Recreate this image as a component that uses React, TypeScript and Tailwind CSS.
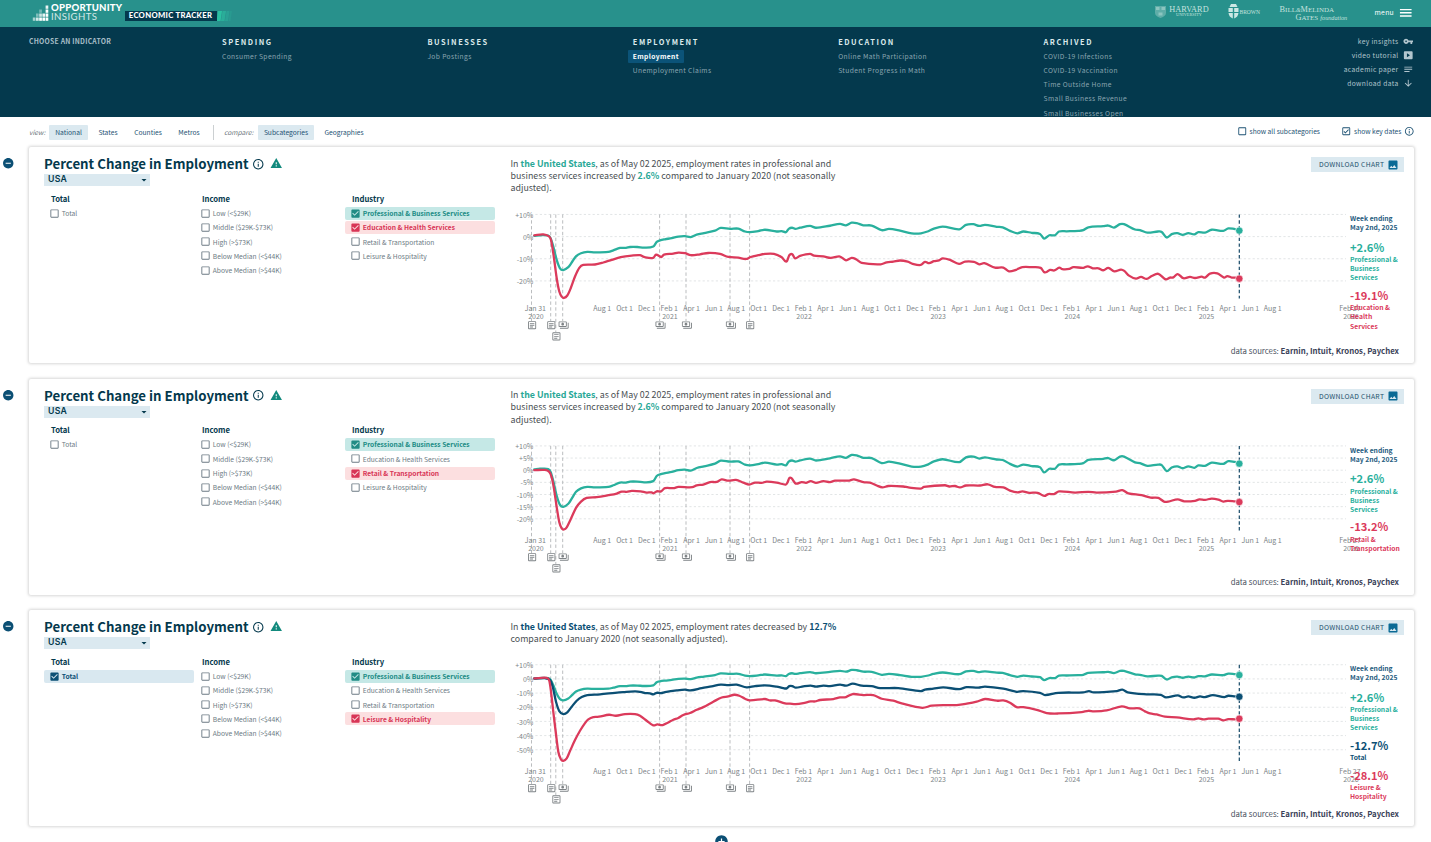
import React from 'react';
import {
  MdAddCircle,
  MdArrowDownward,
  MdArrowDropDown,
  MdCheckBox,
  MdCheckBoxOutlineBlank,
  MdImage,
  MdInfoOutline,
  MdMenu,
  MdNotes,
  MdOutlineArticle,
  MdOutlineCheckBox,
  MdOutlinePayments,
  MdRemoveCircle,
  MdVpnKey,
  MdWarning,
} from 'react-icons/md';

type Point = [number, number];

interface Series {
  name: string[];
  value: string;
  end: number;
  color: string;
  points: Point[];
}

interface CardData {
  selected: Record<string, Tone>;
  summary: React.ReactNode;
  top: number;
  zero: number;
  unit: number;
  ticks: number[];
  series: Series[];
}

type Tone = 'teal' | 'red' | 'navy';

// [x on the time axis, percent change]
const professional: Point[] = [
  [34.3, 0.3], [40, 0.6], [48.3, 0.5], [50.7, -0.8], [53.3, -4.5], [56.7, -10.5], [60, -14.3], [63.3, -15.1], [68.3, -13.8], [71.7, -11.7],
  [76, -8.9], [81, -7.5], [87.3, -6.9], [95, -7.1], [108.3, -6.9], [113.3, -6.2], [120, -5.1], [126, -5.1], [130, -4.7], [137.3, -4.7],
  [144.3, -5], [153.3, -4.5], [156.7, -2.4], [160, -1.7], [165, -1.2], [171.7, -0.7], [178.3, 0], [185, 0.2], [190.7, -0.2], [196.7, 0.9],
  [204, 1.6], [215, 2.7], [220.7, 3.9], [230, 3.5], [238.3, 3.6], [245, 2.3], [250, 2], [258.3, 2.5], [265, 3.1], [276.7, 2.3],
  [281.7, 2.5], [286, 2], [288.7, 3.5], [292, 4], [295.3, 3.5], [300, 4], [310, 4.8], [316, 4], [330, 4.9], [340, 5.7],
  [346, 5.1], [351.7, 6.3], [356.7, 6.1], [363.3, 5.1], [371.7, 5], [381.7, 2.9], [389, 3.5], [400, 2.7], [411.7, 1.5], [421, 1.5],
  [428.3, 2.4], [433.3, 3.5], [442.7, 4.5], [459.3, 3.3], [466, 5.3], [473.3, 5.6], [479.3, 4.8], [485, 5.3], [496.7, 4.4], [502.7, 4.2],
  [510, 2.6], [517.3, 1.5], [523.3, 2.3], [531.7, 1.7], [540, 1.2], [544, -0.9], [549.3, 0.6], [555, 0.6], [559, 2.3], [566.7, 2.4],
  [578.3, 2.6], [583.3, 2.9], [588.3, 4.2], [603.3, 4.7], [608.3, 5], [614, 4.1], [620, 5.6], [624, 5.6], [635, 3.2], [640, 2.9],
  [647.3, 1.8], [658, 2.3], [661.7, 2.1], [666.7, -0.4], [671.7, 1.1], [677.3, 1.6], [682.7, 0.8], [688.3, 1.6], [694.3, 1], [698.3, 2],
  [705, 1.8], [711.7, 3.1], [723.3, 2.6], [728.3, 3.7], [735, 3.4],
];

const education: Point[] = [
  [34.3, 0.6], [43.3, 1], [49, 0.1], [51, -1.5], [53.3, -7.5], [56.7, -18.8], [59.3, -24.8], [61.7, -27.1], [64, -27.7], [67.3, -26.6],
  [70.7, -23.3], [75, -18], [79.3, -14.1], [83.3, -12.8], [95, -12.6], [103.3, -11.7], [111.7, -10.5], [120.7, -9.3], [131.7, -8.6], [140, -8.4],
  [144, -9.2], [153.3, -9.6], [156, -8.1], [161.3, -9.2], [164, -8.1], [173.3, -7.7], [178.3, -7.2], [185, -7.5], [190.7, -8.4], [200, -8],
  [208.3, -7.4], [220, -7.8], [228.3, -9.2], [238.3, -9.5], [246, -10.1], [250.7, -9.2], [258.3, -8.4], [265, -7.8], [274, -7.8], [281.7, -9.3],
  [285, -11], [287, -11], [289.3, -8.4], [292.3, -8], [295, -9.8], [300, -8.7], [310, -7.8], [314, -8.6], [323.3, -8.9], [330.7, -9.6],
  [340, -9], [346, -10.7], [351.7, -9.6], [356, -10.2], [361.7, -11.9], [380.7, -12.5], [386.7, -11.6], [393.3, -11.3], [400, -10.8], [407.7, -11.3],
  [412.7, -12.3], [420.7, -12.8], [425, -11.4], [429, -12], [434, -11.1], [439, -10.7], [442.7, -9.8], [450, -10.5], [459, -12.3], [465, -11.3],
  [474, -11.4], [479.3, -12.5], [484.3, -12], [495, -14], [503.3, -14], [509, -15.7], [516, -15], [522.3, -13.8], [531.7, -13.8], [540.7, -14.1],
  [544, -16], [546.7, -16], [550, -15], [554.3, -15.3], [559.3, -14], [562.3, -14.7], [569.3, -14.6], [573.3, -13.8], [583.3, -14.1], [587.7, -13.4],
  [592.7, -14.3], [598.3, -14.3], [603.3, -15.2], [608.3, -14.1], [614.3, -15.7], [621, -14.9], [624.3, -15.5], [629, -17.6], [636, -19], [641, -18.2],
  [646.7, -19.1], [651.7, -17.8], [658.3, -16.8], [665.7, -19.3], [670, -18.5], [673.3, -18.4], [677.7, -16.9], [683.3, -18.8], [690, -18.2], [695, -18.7],
  [701.7, -18.1], [705, -18.5], [710, -16.7], [717.3, -16.6], [724, -18.5], [727.3, -17.8], [731.7, -18.5], [735.7, -18.5],
];

const retail: Point[] = [
  [34.3, 0], [45, 0.1], [49.3, -0.7], [51.7, -2.9], [54, -7.7], [56.7, -15.2], [59.3, -21.4], [61.7, -23.9], [64, -24.4], [66.7, -23.5],
  [70.7, -20.2], [76, -15.5], [81, -12.9], [86.7, -11.4], [96.7, -11.1], [108.3, -10.3], [116.7, -9.6], [121.7, -8.8], [126.7, -8.9], [131.7, -8.5],
  [140.7, -8.7], [146.7, -9.2], [151.7, -9.1], [153.3, -9.5], [156.7, -8.7], [161, -8.7], [165, -7.4], [173.3, -7.4], [178.3, -6.9], [192.3, -7],
  [196.7, -6.2], [203.3, -5.9], [210, -4.9], [216.7, -4.8], [221.7, -3.8], [228.3, -4.3], [236, -4], [243.3, -5.1], [249.3, -5.9], [255, -5.1],
  [261.7, -5.2], [266.7, -4.7], [276.7, -5.1], [285.7, -5.9], [287.7, -4.9], [289.3, -3.2], [291.7, -3.4], [295.7, -5.5], [301.7, -4.9], [306, -5.2],
  [310.7, -4.5], [316, -5.2], [323.3, -4.5], [330, -4.9], [335, -4.3], [348.3, -4.3], [354, -3.8], [363.3, -4.9], [370, -5.1], [376.7, -6.3],
  [382.3, -7.1], [388.3, -6.5], [403.3, -6.7], [408.3, -7.1], [420.7, -7.6], [424, -6.9], [445, -6.2], [449.3, -6.7], [455, -6.5], [460, -7.1],
  [466, -6.3], [480, -6.3], [487.7, -5.8], [495, -6.9], [503.3, -7.1], [510, -8.4], [517.7, -9.1], [522.3, -8.7], [529.3, -9.3], [537.7, -9.3],
  [544.3, -10.6], [548.3, -9.8], [554, -9.8], [559, -8.7], [575, -9.2], [588.3, -8.9], [596.7, -9.2], [616, -8.8], [622.3, -8.2], [628.3, -9.5],
  [641.7, -10.3], [650.7, -11.3], [658.3, -11.4], [664, -12.9], [668.3, -12.9], [677.7, -12], [684.3, -12.8], [695, -12.6], [699.3, -12], [705, -12.2],
  [711.7, -11.7], [718.3, -12.1], [723.3, -12.9], [727.7, -12.6], [735, -12.8],
];

const total: Point[] = [
  [34.3, 0.2], [45, 0.5], [50, -0.8], [52.7, -5.5], [56, -16.1], [59.3, -22.7], [63.3, -24.8], [67.3, -23.6], [71.7, -19.6], [76.7, -15.4],
  [81.7, -12.8], [87.3, -11.4], [100, -10.9], [115, -9.8], [123.3, -9.3], [135, -8.8], [141.7, -9.3], [145, -10], [150, -10.2], [153.3, -10.9],
  [156.7, -9.8], [161, -10], [165, -9.3], [176.7, -8.1], [185, -7.6], [190.7, -8.1], [201.7, -6.5], [211.7, -5.3], [220.7, -4.1], [228.3, -4.4],
  [236.7, -4.1], [246.7, -6], [255, -5.1], [265, -4.6], [276.7, -5.5], [283.3, -6.5], [286.7, -6.7], [289.3, -5.1], [292.3, -5.1], [295.7, -6.2],
  [303.3, -5.3], [310.7, -4.8], [316, -5.5], [323.3, -4.8], [330, -5.1], [340, -4.1], [346, -4.8], [352.7, -3.4], [361.7, -4.8], [371.7, -5.1],
  [380, -6.5], [398.3, -6.5], [420.7, -8.6], [425, -7.6], [433.3, -6.9], [443.3, -6], [459.3, -7.2], [466.7, -5.8], [478.3, -6.2], [485, -5.5],
  [503.3, -6.9], [516.7, -9.1], [523.3, -8.6], [540, -9.8], [545, -11.4], [558.3, -9.8], [583.3, -9.5], [589, -8.6], [593.3, -9.5], [616.7, -8.6],
  [622.3, -7.6], [627.7, -9.5], [646.7, -10.9], [660.7, -11.2], [666, -13.1], [677.7, -11.6], [683.3, -13.1], [688.3, -12.4], [694.3, -13.3], [700, -12.4],
  [705, -12.8], [712.7, -11.4], [724.3, -12.8], [728.3, -11.9], [735, -12.4],
];

const leisure: Point[] = [
  [34.3, 0.3], [46.7, 0.8], [49.3, -1.3], [51, -9], [53.3, -23.2], [55.7, -37.3], [58.3, -51.4], [61, -56.8], [63.3, -57.8], [66.7, -56.1],
  [70, -50.9], [75, -43.2], [80, -36.6], [85, -31.2], [88.3, -28.6], [93.3, -26.9], [99, -26.7], [109, -25.3], [116, -26], [125, -24.8],
  [135, -24.8], [140, -26], [146.7, -29.5], [153.3, -32.8], [157.3, -32.1], [162.7, -32.6], [168.3, -30.7], [173.3, -28.8], [178.3, -27.6], [183.3, -25.5],
  [190, -24.1], [196.7, -21.8], [203.3, -19.9], [213.3, -16.1], [221.7, -13.1], [228.3, -12.4], [234.3, -11.2], [239.3, -11.9], [245, -14], [250, -15.2],
  [265, -14.2], [270, -15.2], [275, -15.2], [285, -17.3], [290, -17.5], [295.7, -17.8], [303.3, -17.1], [310.7, -15.9], [315, -15.9], [320, -14.9],
  [333.3, -14.2], [340, -13.1], [346, -12.8], [352.7, -10.7], [363.3, -11.4], [373.3, -11.4], [381.7, -14], [393.3, -15.4], [401.7, -17.3], [422.3, -20.4],
  [431.7, -18.9], [447.3, -18.5], [456.7, -18.5], [466.7, -17.5], [476.7, -16.1], [485, -14.2], [496.7, -15.4], [503.3, -15.2], [510, -16.8], [516.7, -19.9],
  [523.3, -19.9], [536.7, -21.8], [546.7, -24.1], [558.3, -24.4], [581.7, -23.4], [588.3, -22.5], [594, -22.9], [606.7, -22.2], [621.7, -19.4], [630, -20.8],
  [639.3, -20.8], [645, -22.9], [650, -24.4], [656.7, -25.1], [665, -26.7], [676.7, -27.2], [693.3, -28.6], [698.3, -27.9], [703.3, -28.6], [708.3, -28.1],
  [718.3, -28.1], [723.3, -29.3], [728.3, -28.4], [735, -28.6],
];

const TEAL = '#29b09d';
const RED = '#db3a5b';
const NAVY = '#0b4f74';

const professionalSeries: Series = {
  name: ['Professional &', 'Business', 'Services'],
  value: '+2.6%',
  end: 2.7,
  color: TEAL,
  points: professional,
};

const increaseSummary = (
  <>
    In <b className="text-[#29a897]">the United States</b>, as of May 02 2025, employment rates in professional and
    <br />
    business services increased by <b className="text-[#29a897]">2.6%</b> compared to January 2020 (not seasonally
    <br />
    adjusted).
  </>
);

const cards: CardData[] = [
  {
    selected: { 'Professional & Business Services': 'teal', 'Education & Health Services': 'red' },
    summary: increaseSummary,
    top: 60,
    zero: 89.6,
    unit: 2.215,
    ticks: [10, 0, -10, -20],
    series: [
      professionalSeries,
      { name: ['Education &', 'Health', 'Services'], value: '-19.1%', end: -19, color: RED, points: education },
    ],
  },
  {
    selected: { 'Professional & Business Services': 'teal', 'Retail & Transportation': 'red' },
    summary: increaseSummary,
    top: 60,
    zero: 91.2,
    unit: 2.43,
    ticks: [10, 5, 0, -5, -10, -15, -20],
    series: [
      professionalSeries,
      { name: ['Retail &', 'Transportation'], value: '-13.2%', end: -13.1, color: RED, points: retail },
    ],
  },
  {
    selected: { Total: 'navy', 'Professional & Business Services': 'teal', 'Leisure & Hospitality': 'red' },
    summary: (
      <>
        In <b className="text-[#0b4f74]">the United States</b>, as of May 02 2025, employment rates decreased by{' '}
        <b className="text-[#0b4f74]">12.7%</b>
        <br />
        compared to January 2020 (not seasonally adjusted).
      </>
    ),
    top: 47,
    zero: 68.9,
    unit: 1.417,
    ticks: [10, 0, -10, -20, -30, -40, -50],
    series: [
      professionalSeries,
      { name: ['Total'], value: '-12.7%', end: -12.6, color: NAVY, points: total },
      { name: ['Leisure &', 'Hospitality'], value: '-28.1%', end: -28.1, color: RED, points: leisure },
    ],
  },
];

const navColumns = [
  { title: 'SPENDING', items: ['Consumer Spending'] },
  { title: 'BUSINESSES', items: ['Job Postings'] },
  { title: 'EMPLOYMENT', items: ['Employment', 'Unemployment Claims'] },
  { title: 'EDUCATION', items: ['Online Math Participation', 'Student Progress in Math'] },
  {
    title: 'ARCHIVED',
    items: ['COVID-19 Infections', 'COVID-19 Vaccination', 'Time Outside Home', 'Small Business Revenue', 'Small Businesses Open'],
  },
];

const filterGroups = [
  { title: 'Total', width: 'w-[150px] mr-px', items: ['Total'] },
  {
    title: 'Income',
    width: 'w-[150px]',
    items: ['Low (<$29K)', 'Middle ($29K-$73K)', 'High (>$73K)', 'Below Median (<$44K)', 'Above Median (>$44K)'],
  },
  {
    title: 'Industry',
    width: 'w-[150px]',
    items: ['Professional & Business Services', 'Education & Health Services', 'Retail & Transportation', 'Leisure & Hospitality'],
  },
];

const toneRow: Record<Tone, string> = {
  teal: 'bg-[#c5e8e6] text-[#218c85]',
  red: 'bg-[#fcdfe0] text-[#d83556]',
  navy: 'bg-[#d9e8f0] text-[#0b4f74]',
};

const events = [
  { x: 31.5, icon: 'doc', row: 0 },
  { x: 50.7, icon: 'doc', row: 0 },
  { x: 55.8, icon: 'doc', row: 1 },
  { x: 62.7, icon: 'money', row: 0 },
  { x: 159.6, icon: 'money', row: 0 },
  { x: 186, icon: 'money', row: 0 },
  { x: 230, icon: 'money', row: 0 },
  { x: 249.6, icon: 'doc', row: 0 },
];

const months = ['Aug 1', 'Oct 1', 'Dec 1', 'Feb 1', 'Apr 1', 'Jun 1'];

const toPath = (pts: Point[]) => {
  let d = `M${pts[0][0]} ${pts[0][1]}`;
  for (let i = 0; i < pts.length - 1; i++) {
    const p0 = pts[i - 1] || pts[i];
    const p1 = pts[i];
    const p2 = pts[i + 1];
    const p3 = pts[i + 2] || p2;
    const dx = (p2[0] - p1[0]) / 3;
    const s1 = (p2[1] - p0[1]) / (p2[0] - p0[0]);
    const s2 = (p3[1] - p1[1]) / (p3[0] - p1[0]);
    d += `C${p1[0] + dx} ${p1[1] + s1 * dx} ${p2[0] - dx} ${p2[1] - s2 * dx} ${p2[0]} ${p2[1]}`;
  }
  return d;
};

const Chart: React.FC<{ card: CardData }> = ({ card }) => {
  const y = (v: number) => card.zero - v * card.unit;
  const plotTop = y(10);

  return (
    <svg
      width={850}
      height={200 - card.top}
      viewBox={`0 ${card.top} 850 ${200 - card.top}`}
      className="shrink-0 overflow-visible text-[7px]"
      fill="#7d8488"
    >
      {card.ticks.map((t) => (
        <g key={t}>
          <line x1={31} x2={846} y1={y(t)} y2={y(t)} stroke="#dadedf" strokeWidth={0.8} strokeDasharray="2.2 2.2" />
          <text x={33.3} y={y(t) + 3.1} textAnchor="end">
            {t > 0 ? `+${t}` : t}%
          </text>
        </g>
      ))}
      {events.map((e) => (
        <line key={e.x} x1={e.x} x2={e.x} y1={plotTop} y2={e.row ? 185 : 174} stroke="#b3b6b8" strokeWidth={0.9} strokeDasharray="3.4 2.4" />
      ))}
      <g textAnchor="middle">
        <text x={35.3} y={164.3}>Jan 31</text>
        <text x={36} y={171.7}>2020</text>
        {Array.from({ length: 31 }, (_, i) => (
          <text key={i} x={102.2 + i * 22.35} y={164.3}>
            {months[i % 6]}
          </text>
        ))}
        {[2021, 2022, 2023, 2024, 2025].map((year, i) => (
          <text key={year} x={170 + i * 134.1} y={171.7}>
            {year}
          </text>
        ))}
        <text x={850} y={164.3}>Feb 27</text>
        <text x={851} y={171.7}>2026</text>
      </g>
      {events.map((e) =>
        e.icon === 'doc' ? (
          <MdOutlineArticle key={e.x} x={e.x - 4.8} y={e.row ? 184 : 172.8} size={10.8} color="#7e8386" />
        ) : (
          <MdOutlinePayments key={e.x} x={e.x - 4.6} y={172.6} size={11} color="#7e8386" />
        )
      )}
      <line x1={739.3} x2={739.3} y1={plotTop} y2={151.5} stroke="#174a68" strokeWidth={1.2} strokeDasharray="3.4 2.4" />
      {card.series.map((s) => (
        <path
          key={s.value}
          d={toPath(s.points.map(([px, v]): Point => [px, y(v)]))}
          fill="none"
          stroke={s.color}
          strokeWidth={2.3}
          strokeLinecap="round"
          strokeLinejoin="round"
        />
      ))}
      {card.series.map((s) => (
        <circle key={s.value} cx={739.3} cy={y(s.end)} r={3.7} fill={s.color} stroke="#fff" strokeWidth={0.6} />
      ))}
    </svg>
  );
};

const ChartCard: React.FC<{ card: CardData }> = ({ card }) => {
  return (
    <div className="flex h-[216px] shrink-0">
      <div className="w-[29px] shrink-0 pl-[2px] pt-[10px]">
        <MdRemoveCircle size={12.5} color="#0b4f74" />
      </div>
      <section className="flex h-[216px] w-[1385px] rounded-[2px] bg-white shadow-[0_0_3px_1px_rgba(0,0,0,0.16)]">
        <div className="w-[471px] shrink-0 pl-[15px] pt-[8px] text-[#04394d]">
          <div className="flex h-[19px] items-start">
            <h2 className="w-[208px] whitespace-nowrap text-[13.25px] font-bold leading-[17px]">Percent Change in Employment</h2>
            <MdInfoOutline size={12.5} className="mt-[2.5px]" />
            <MdWarning size={12.5} color="#128a7d" className="ml-[5.5px] mt-[2px]" />
          </div>
          <div className="flex h-[12px] w-[106px] items-center justify-between bg-[#dbe9f0] pl-1">
            <span className="font-['Inter'] text-[8.7px] font-semibold tracking-[0.3px]">USA</span>
            <MdArrowDropDown size={12} />
          </div>
          <div className="mt-[6.5px] flex">
            {filterGroups.map((group) => (
              <div key={group.title} className={`${group.width} shrink-0`}>
                <h3 className="mb-[2px] pl-[7px] text-[7.7px] font-bold leading-[12px]">{group.title}</h3>
                {group.items.map((item) => {
                  const tone = card.selected[item];
                  return (
                    <div
                      key={item}
                      className={`mb-[1.3px] flex h-[13px] items-center whitespace-nowrap rounded-[2px] pl-[4.5px] text-[6.7px] ${tone ? toneRow[tone] + ' font-bold' : 'text-[#6c7a84]'}`}
                    >
                      {tone ? <MdCheckBox size={11} /> : <MdCheckBoxOutlineBlank size={11} />}
                      <span className="ml-[2.3px]">{item}</span>
                    </div>
                  );
                })}
              </div>
            ))}
          </div>
        </div>
        <div className="flex w-[914px] flex-col">
          <div className="flex shrink-0 justify-between pl-[10.5px] pr-[10px]" style={{ height: card.top }}>
            <p className="whitespace-nowrap pt-[10.5px] text-[8.86px] leading-[12.4px] text-[#4a4f53]">{card.summary}</p>
            <button className="mt-[10px] flex h-[15px] w-[93px] items-center justify-between whitespace-nowrap bg-[#dbe9f0] pl-[8px] pr-[5px] text-[6.8px] tracking-[0.3px] text-[#24516c]">
              DOWNLOAD CHART
              <MdImage size={12} color="#0b6a95" />
            </button>
          </div>
          <div className="flex h-0 flex-1">
            <Chart card={card} />
            <div className="z-10 pt-[7px] text-[6.75px] font-bold leading-[9.1px]">
              <div className="whitespace-nowrap text-[#265c80]">
                Week ending
                <br />
                May 2nd, 2025
              </div>
              <div className="pt-[2.3px]">
                {card.series.map((s) => (
                  <div key={s.value} className="mt-[5.3px] whitespace-nowrap" style={{ color: s.color }}>
                    <div className="text-[11.2px] leading-[15.5px]">{s.value}</div>
                    {s.name.map((line) => (
                      <div key={line}>{line}</div>
                    ))}
                  </div>
                ))}
              </div>
            </div>
          </div>
          <div className="h-[18.5px] shrink-0 pr-[15px] text-right text-[7.8px] leading-[12px] text-[#4b5260]">
            data sources: <b className="text-[#3a4258]">Earnin, Intuit, Kronos, Paychex</b>
          </div>
        </div>
      </section>
    </div>
  );
};

const dotRows = [
  [0, 0, 0, 0, 0.9],
  [0, 0, 0.35, 0, 1],
  [0, 0.4, 0.75, 0.9, 1],
  [0.6, 0.8, 1, 1, 1],
];

const Header = () => (
  <header className="flex h-[27px] shrink-0 items-start justify-between bg-[#28918c] text-white">
    <div className="flex pl-[32px] pt-[5px]">
      <svg width="17" height="16" viewBox="0 0 17 16" fill="white">
        {dotRows.map((row, r) =>
          row.map((o, c) => <rect key={`${r}-${c}`} x={0.8 + c * 3.2} y={0.5 + r * 4} width="2.7" height="3.3" opacity={o} />)
        )}
      </svg>
      <div className="-mt-[1px] ml-[2px] w-[73.5px] whitespace-nowrap font-['Lato'] text-[9.6px] leading-[8.5px] tracking-[0.2px]">
        <div className="font-black">OPPORTUNITY</div>
        <div className="tracking-[0.4px] opacity-80">INSIGHTS</div>
      </div>
      <div className="mt-[6px] flex h-[10px] w-[92px] items-center justify-center whitespace-nowrap bg-[#04394d] font-['Lato'] text-[7.7px] font-black tracking-[0.3px]">
        ECONOMIC TRACKER
      </div>
      <svg width="18" height="10" viewBox="0 0 18 10" className="mt-[6px]" fill="#2bc0a2">
        <path d="M1 0h4l-1.500 10h-4z" />
        <path d="M5.500 0h3.500l-1.500 10h-3.500z" opacity=".6" />
        <path d="M9.500 0h3l-1.500 10h-3z" opacity=".35" />
        <path d="M13 0h2l-1.500 10h-2z" opacity=".2" />
      </svg>
    </div>
    <div className="flex pr-[18px] pt-[4px] font-['Liberation_Serif'] text-[#c5e2df]">
      <svg width="13" height="15" viewBox="0 0 13 15" fill="#8cc5c0">
        <path d="M1 2h11v7q0 3-5.500 5Q1 12 1 9z" opacity=".55" />
        <path d="M2 3h3.500v3H2zM7.500 3H11v3H7.500zM4.500 8.500h4v3h-4z" />
      </svg>
      <div className="ml-[2px] w-[58px] pt-[1.500px]">
        <div className="w-[40px] text-center">
          <div className="text-[8.3px] leading-[7.500px]">HARVARD</div>
          <div className="text-[4.300px] leading-[4px]">UNIVERSITY</div>
        </div>
      </div>
      <svg width="11" height="16" viewBox="0 0 11 16" fill="#cbe7e4" className="ml-[0.500px]">
        <path d="M3 0h5l1.500 3H1.500z" />
        <path d="M.500 4h4.300v4H.500zM6.200 4h4.300v4H6.200zM.500 9h4.300v5.500Q1 13 .500 9zM6.200 9h4.300q-.500 4-4.300 5.500z" />
      </svg>
      <span className="ml-[1px] w-[40px] pt-[4.500px] text-[5.500px] leading-[7px]">BROWN</span>
      <div className="w-[95px] whitespace-nowrap text-[8.300px] leading-[7px]">
        <div className="pt-[1.500px]">
          B<span className="text-[7px]">ILL</span>
          <i className="text-[6px]">&amp;</i>M<span className="text-[7px]">ELINDA</span>
        </div>
        <div className="pl-[16px]">
          G<span className="text-[7px]">ATES</span> <i className="text-[6.200px]">foundation</i>
        </div>
      </div>
      <span className="w-[23px] pt-[4px] font-['Noto_Sans_CJK_SC'] text-[6.800px] leading-[9px] tracking-[0.300px] text-white">menu</span>
      <MdMenu size={15.5} color="white" className="mt-[1px]" />
    </div>
  </header>
);

const VideoIcon = ({ size }: { size: number }) => (
  <svg width={size} height={size} viewBox="0 0 24 24" fill="currentColor">
    <path fillRule="evenodd" d="M4 3h16a2 2 0 0 1 2 2v14a2 2 0 0 1-2 2H4a2 2 0 0 1-2-2V5a2 2 0 0 1 2-2zm5 4.500v9l7-4.500z" />
  </svg>
);

const links = [
  { label: 'key insights', Icon: MdVpnKey },
  { label: 'video tutorial', Icon: VideoIcon },
  { label: 'academic paper', Icon: MdNotes },
  { label: 'download data', Icon: MdArrowDownward },
];

const IndicatorNav = () => (
  <nav className="flex h-[90px] shrink-0 justify-between overflow-hidden bg-[#04394d] pl-[29px] pr-[18px] pt-[8px] text-[6.7px] text-[#8ba6b1]">
    <div className="flex whitespace-nowrap">
      <div className="w-[193px] text-[6.8px] font-bold leading-[12px] tracking-[0.23px] text-[#a9bfc8]">CHOOSE AN INDICATOR</div>
      {navColumns.map((col) => (
        <div key={col.title} className="w-[205.4px]">
          <div className="text-[7.4px] font-bold leading-[13px] tracking-[1.55px] text-[#dcebec]">{col.title}</div>
          <div className="mt-[1.5px]">
            {col.items.map((item) => (
              <div key={item} className="flex h-[14.3px] items-start leading-[13px] tracking-[0.38px]">
                {item === 'Employment' ? (
                  <span className="-ml-[5px] w-[56px] rounded-[1px] bg-[#0b5378] pl-[5px] font-bold text-white">{item}</span>
                ) : (
                  item
                )}
              </div>
            ))}
          </div>
        </div>
      ))}
    </div>
    <div className="-ml-[90px] -mt-[1px] w-[90px] shrink-0">
      {links.map(({ label, Icon }) => (
        <div key={label} className="flex h-[14px] items-center justify-end gap-[4px] whitespace-nowrap tracking-[0.35px] text-[#b3c6ce]">
          {label}
          <Icon size={10.5} />
        </div>
      ))}
    </div>
  </nav>
);

const Pill: React.FC<{ label: string; active?: boolean; width: string }> = ({ label, active, width }) => (
  <span className={`${width} flex h-[15px] items-center justify-center rounded-[1px] ${active ? 'bg-[#dbe9f0]' : ''}`}>{label}</span>
);

const ViewBar = () => (
  <div className="flex h-[30px] shrink-0 items-center justify-between whitespace-nowrap pl-[29px] pr-[17px] text-[6.7px] text-[#1d5273]">
    <div className="flex items-center">
      <span className="w-[20px] italic text-[#6a747a]">view:</span>
      <Pill label="National" active width="w-[39px]" />
      <Pill label="States" width="w-[40px]" />
      <Pill label="Counties" width="w-[40px]" />
      <Pill label="Metros" width="w-[42px]" />
      <span className="ml-[3px] mr-[10px] h-[15px] w-px bg-[#ccd0d2]" />
      <span className="w-[34px] italic text-[#6a747a]">compare:</span>
      <Pill label="Subcategories" active width="w-[56px]" />
      <Pill label="Geographies" width="w-[60px]" />
    </div>
    <div className="flex items-center pb-[2px]">
      <MdCheckBoxOutlineBlank size={10.5} />
      <span className="ml-[2.5px] w-[91.5px]">show all subcategories</span>
      <MdOutlineCheckBox size={10.5} />
      <span className="ml-[2.5px] w-[49.5px]">show key dates</span>
      <MdInfoOutline size={10.5} />
    </div>
  </div>
);

export default function App() {
  return (
    <div className="flex h-[842px] w-[1431px] flex-col overflow-hidden bg-white font-['Noto_Sans_CJK_SC',sans-serif]">
      <Header />
      <IndicatorNav />
      <ViewBar />
      <main className="flex flex-col gap-[15.5px]">
        {cards.map((card, i) => (
          <ChartCard key={i} card={card} />
        ))}
      </main>
      <div className="flex shrink-0 justify-center pl-[12px] pt-[8px]">
        <MdAddCircle size={15} color="#0b4f74" />
      </div>
    </div>
  );
}
